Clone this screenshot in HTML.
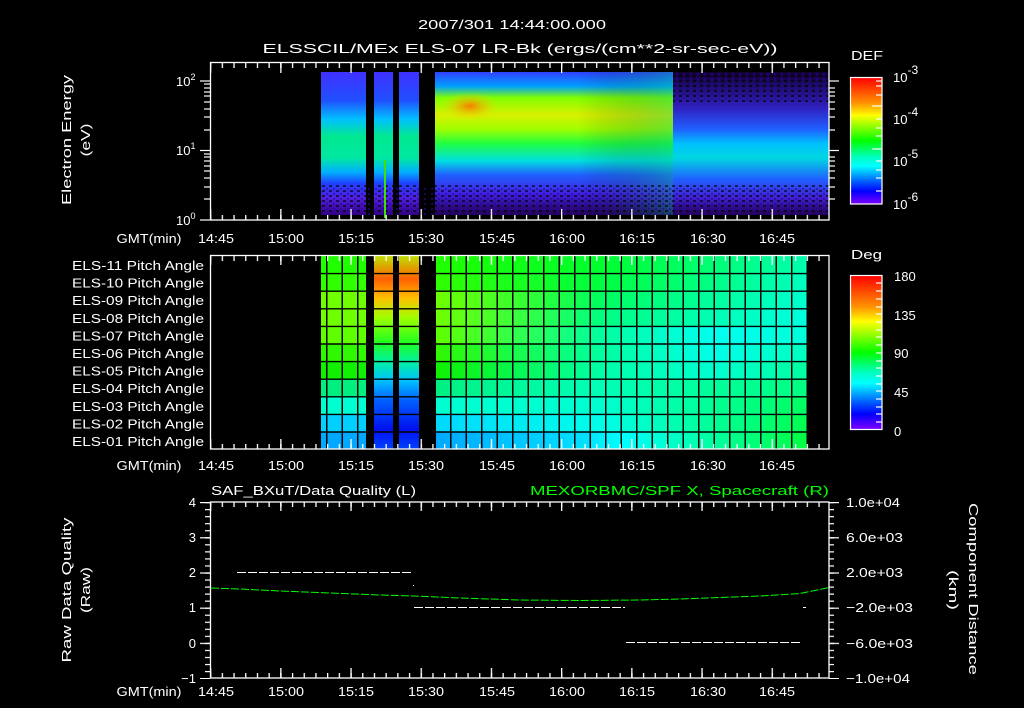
<!DOCTYPE html>
<html><head><meta charset="utf-8"><style>
html,body{margin:0;padding:0;background:#000;}
svg{display:block}
text{font-family:"Liberation Sans",sans-serif;fill:#fff;font-size:13px}
</style></head><body>
<svg width="1024" height="708" viewBox="0 0 1024 708" xmlns="http://www.w3.org/2000/svg">
<defs>
<linearGradient id="gA" x1="0" y1="0" x2="0" y2="1">
<stop offset="0" stop-color="#4030ff"/><stop offset="0.2" stop-color="#2050ff"/><stop offset="0.33" stop-color="#00c0ff"/><stop offset="0.45" stop-color="#00e890"/><stop offset="0.6" stop-color="#00e8a0"/><stop offset="0.7" stop-color="#00b0ff"/><stop offset="0.78" stop-color="#2040ff"/><stop offset="0.88" stop-color="#5020e0"/><stop offset="1" stop-color="#300080"/></linearGradient>
<linearGradient id="gB" x1="0" y1="0" x2="0" y2="1">
<stop offset="0" stop-color="#3040ff"/><stop offset="0.1" stop-color="#00a0ff"/><stop offset="0.18" stop-color="#80ff00"/><stop offset="0.3" stop-color="#d8f000"/><stop offset="0.4" stop-color="#a0ff00"/><stop offset="0.5" stop-color="#20ff40"/><stop offset="0.62" stop-color="#00e0e0"/><stop offset="0.72" stop-color="#2060ff"/><stop offset="0.85" stop-color="#4020e0"/><stop offset="1" stop-color="#200050"/></linearGradient>
<linearGradient id="gC" x1="0" y1="0" x2="0" y2="1">
<stop offset="0" stop-color="#100030"/><stop offset="0.25" stop-color="#3020c0"/><stop offset="0.4" stop-color="#2060ff"/><stop offset="0.5" stop-color="#00c0ff"/><stop offset="0.6" stop-color="#00d8e0"/><stop offset="0.75" stop-color="#2060ff"/><stop offset="0.88" stop-color="#4020d0"/><stop offset="1" stop-color="#200050"/></linearGradient>
<linearGradient id="gBh" x1="0" y1="0" x2="1" y2="0">
<stop offset="0" stop-color="#000" stop-opacity="0"/><stop offset="0.6" stop-color="#000" stop-opacity="0"/><stop offset="1" stop-color="#00c080" stop-opacity="0.35"/></linearGradient>
<radialGradient id="gOr" cx="0.5" cy="0.5" r="0.5">
<stop offset="0" stop-color="#ff7000" stop-opacity="0.9"/><stop offset="1" stop-color="#ffd000" stop-opacity="0"/></radialGradient>
<linearGradient id="cb1" x1="0" y1="0" x2="0" y2="1">
<stop offset="0" stop-color="#ff0000"/><stop offset="0.2" stop-color="#ff9000"/><stop offset="0.3" stop-color="#ffff00"/><stop offset="0.5" stop-color="#00ff00"/><stop offset="0.63" stop-color="#00ffc0"/><stop offset="0.7" stop-color="#00ffff"/><stop offset="0.82" stop-color="#0060ff"/><stop offset="0.9" stop-color="#0000ff"/><stop offset="1" stop-color="#8000ff"/></linearGradient>
<pattern id="tmin" x="210" y="0" width="11.7" height="10" patternUnits="userSpaceOnUse"><rect x="0" y="0" width="1.3" height="10" fill="#fff"/></pattern>
<pattern id="tmaj" x="210" y="0" width="70.2" height="20" patternUnits="userSpaceOnUse"><rect x="0" y="0" width="1.3" height="20" fill="#fff"/></pattern>
<pattern id="vgrid" x="326" y="0" width="15.5" height="10" patternUnits="userSpaceOnUse"><rect x="0" y="0" width="1.5" height="10" fill="#000"/></pattern>
<pattern id="yb" x="0" y="502" width="10" height="7.04" patternUnits="userSpaceOnUse"><rect x="0" y="0" width="10" height="1.2" fill="#fff"/></pattern>
<pattern id="ybM" x="0" y="502" width="12" height="35.2" patternUnits="userSpaceOnUse"><rect x="0" y="0" width="12" height="1.2" fill="#fff"/></pattern>
<pattern id="speck" x="0" y="0" width="7" height="5" patternUnits="userSpaceOnUse"><rect x="0" y="0" width="3" height="2" fill="#000" opacity="0.6"/><rect x="4" y="3" width="2" height="2" fill="#3000a0" opacity="0.6"/></pattern>
</defs>

<!-- Titles -->
<text x="512" y="29" text-anchor="middle" font-size="17" textLength="188" lengthAdjust="spacingAndGlyphs">2007/301 14:44:00.000</text>
<text x="520" y="53" text-anchor="middle" font-size="17" textLength="515" lengthAdjust="spacingAndGlyphs">ELSSCIL/MEx ELS-07 LR-Bk  (ergs/(cm**2-sr-sec-eV))</text>

<!-- ===== TOP PANEL ===== -->
<rect x="321" y="72" width="45" height="143" fill="url(#gA)"/>
<rect x="374" y="72" width="19" height="143" fill="url(#gA)"/>
<rect x="399" y="72" width="20" height="143" fill="url(#gA)"/>
<rect x="435" y="72" width="238" height="143" fill="url(#gB)"/>
<rect x="435" y="72" width="238" height="143" fill="url(#gBh)"/>
<ellipse cx="470" cy="106" rx="28" ry="14" fill="url(#gOr)"/>
<rect x="673" y="72" width="156" height="143" fill="url(#gC)"/>
<rect x="321" y="185" width="508" height="30" fill="url(#speck)"/>
<rect x="673" y="72" width="156" height="30" fill="url(#speck)"/>
<rect x="384" y="160" width="2" height="58" fill="#40e000"/>
<rect x="210.5" y="62.5" width="618.5" height="157.5" fill="none" stroke="#fff" stroke-width="1.3"/>
<rect x="210" y="63" width="619" height="5" fill="url(#tmin)"/>
<rect x="210" y="63" width="619" height="10" fill="url(#tmaj)"/>
<rect x="210" y="215" width="619" height="5" fill="url(#tmin)"/>
<rect x="210" y="209" width="619" height="11" fill="url(#tmaj)"/>
<g stroke="#fff" stroke-width="1.2">
<line x1="200" y1="81" x2="210" y2="81"/><line x1="200" y1="150.5" x2="210" y2="150.5"/><line x1="200" y1="220" x2="210" y2="220"/>
<line x1="204" y1="199" x2="210" y2="199"/><line x1="204" y1="187" x2="210" y2="187"/><line x1="204" y1="178" x2="210" y2="178"/><line x1="204" y1="171" x2="210" y2="171"/><line x1="204" y1="166" x2="210" y2="166"/><line x1="204" y1="161" x2="210" y2="161"/><line x1="204" y1="157" x2="210" y2="157"/><line x1="204" y1="154" x2="210" y2="154"/>
<line x1="204" y1="130" x2="210" y2="130"/><line x1="204" y1="117" x2="210" y2="117"/><line x1="204" y1="109" x2="210" y2="109"/><line x1="204" y1="102" x2="210" y2="102"/><line x1="204" y1="96" x2="210" y2="96"/><line x1="204" y1="92" x2="210" y2="92"/><line x1="204" y1="88" x2="210" y2="88"/><line x1="204" y1="84" x2="210" y2="84"/>
<line x1="829" y1="81" x2="839" y2="81"/><line x1="829" y1="150.5" x2="839" y2="150.5"/>
<line x1="829" y1="199" x2="835" y2="199"/><line x1="829" y1="187" x2="835" y2="187"/><line x1="829" y1="178" x2="835" y2="178"/><line x1="829" y1="171" x2="835" y2="171"/><line x1="829" y1="166" x2="835" y2="166"/><line x1="829" y1="161" x2="835" y2="161"/><line x1="829" y1="157" x2="835" y2="157"/>
<line x1="829" y1="130" x2="835" y2="130"/><line x1="829" y1="117" x2="835" y2="117"/><line x1="829" y1="109" x2="835" y2="109"/><line x1="829" y1="102" x2="835" y2="102"/><line x1="829" y1="96" x2="835" y2="96"/><line x1="829" y1="92" x2="835" y2="92"/><line x1="829" y1="88" x2="835" y2="88"/>
</g>
<text x="176" y="86" font-size="14">10<tspan dy="-6" font-size="9">2</tspan></text>
<text x="176" y="155" font-size="14">10<tspan dy="-6" font-size="9">1</tspan></text>
<text x="176" y="225" font-size="14">10<tspan dy="-6" font-size="9">0</tspan></text>
<text transform="translate(71,140) rotate(-90)" text-anchor="middle" font-size="16" textLength="130" lengthAdjust="spacingAndGlyphs">Electron Energy</text>
<text transform="translate(90,140) rotate(-90)" text-anchor="middle" font-size="16" textLength="33" lengthAdjust="spacingAndGlyphs">(eV)</text>
<g font-size="14" text-anchor="middle">
<text x="149" y="243" textLength="65" lengthAdjust="spacingAndGlyphs">GMT(min)</text>
<text x="216" y="243" textLength="36" lengthAdjust="spacingAndGlyphs">14:45</text><text x="286" y="243" textLength="36" lengthAdjust="spacingAndGlyphs">15:00</text><text x="356" y="243" textLength="36" lengthAdjust="spacingAndGlyphs">15:15</text><text x="426" y="243" textLength="36" lengthAdjust="spacingAndGlyphs">15:30</text><text x="497" y="243" textLength="36" lengthAdjust="spacingAndGlyphs">15:45</text><text x="567" y="243" textLength="36" lengthAdjust="spacingAndGlyphs">16:00</text><text x="637" y="243" textLength="36" lengthAdjust="spacingAndGlyphs">16:15</text><text x="708" y="243" textLength="36" lengthAdjust="spacingAndGlyphs">16:30</text><text x="777" y="243" textLength="36" lengthAdjust="spacingAndGlyphs">16:45</text>
</g>
<text x="851" y="60" font-size="16" textLength="32" lengthAdjust="spacingAndGlyphs">DEF</text>
<rect x="850.5" y="77.5" width="31.5" height="126.5" fill="url(#cb1)" stroke="#fff" stroke-width="1.2"/>
<g stroke="#fff" stroke-width="1.2">
<line x1="876" y1="81" x2="882" y2="81"/><line x1="876" y1="86" x2="882" y2="86"/><line x1="876" y1="95" x2="882" y2="95"/><line x1="872" y1="106" x2="882" y2="106"/><line x1="876" y1="119" x2="882" y2="119"/><line x1="876" y1="128" x2="882" y2="128"/><line x1="876" y1="136" x2="882" y2="136"/><line x1="872" y1="149" x2="882" y2="149"/><line x1="876" y1="161" x2="882" y2="161"/><line x1="876" y1="170" x2="882" y2="170"/><line x1="876" y1="178" x2="882" y2="178"/><line x1="876" y1="191" x2="882" y2="191"/>
</g>
<text x="893" y="82" font-size="17">10<tspan dy="-8" font-size="12">-3</tspan></text>
<text x="893" y="124" font-size="17">10<tspan dy="-8" font-size="12">-4</tspan></text>
<text x="893" y="166" font-size="17">10<tspan dy="-8" font-size="12">-5</tspan></text>
<text x="893" y="209" font-size="17">10<tspan dy="-8" font-size="12">-6</tspan></text>

<!-- ===== MID PANEL ===== -->
<g>
<rect x="321" y="256" width="45" height="17.6" fill="#20ff00"/>
<rect x="321" y="273.6" width="45" height="17.6" fill="#30ff00"/>
<rect x="321" y="291.2" width="45" height="17.6" fill="#70ff00"/>
<rect x="321" y="308.8" width="45" height="17.6" fill="#70ff00"/>
<rect x="321" y="326.4" width="45" height="17.6" fill="#60ff00"/>
<rect x="321" y="344" width="45" height="17.6" fill="#30f800"/>
<rect x="321" y="361.6" width="45" height="17.6" fill="#10f000"/>
<rect x="321" y="379.2" width="45" height="17.6" fill="#00f080"/>
<rect x="321" y="396.8" width="45" height="17.6" fill="#00ffd0"/>
<rect x="321" y="414.4" width="45" height="17.6" fill="#00d0ff"/>
<rect x="321" y="432" width="45" height="16.5" fill="#00a8ff"/>
<linearGradient id="sp" x1="0" y1="0" x2="0" y2="1">
<stop offset="0" stop-color="#c0e000"/><stop offset="0.12" stop-color="#ff6000"/><stop offset="0.22" stop-color="#ffc000"/><stop offset="0.32" stop-color="#a0ff00"/><stop offset="0.45" stop-color="#20ff20"/><stop offset="0.55" stop-color="#00f0a0"/><stop offset="0.65" stop-color="#00c0ff"/><stop offset="0.75" stop-color="#0060ff"/><stop offset="0.9" stop-color="#0010f0"/><stop offset="1" stop-color="#0040ff"/></linearGradient>
<rect x="374" y="256" width="19" height="192.5" fill="url(#sp)"/>
<rect x="399" y="256" width="20" height="192.5" fill="url(#sp)"/>
<linearGradient id="r0" x1="0" x2="1"><stop offset="0" stop-color="#20ff00"/><stop offset="0.45" stop-color="#00ff30"/><stop offset="1" stop-color="#00ffb0"/></linearGradient>
<linearGradient id="r1" x1="0" x2="1"><stop offset="0" stop-color="#30ff00"/><stop offset="0.45" stop-color="#00ff40"/><stop offset="1" stop-color="#00ffc0"/></linearGradient>
<linearGradient id="r2" x1="0" x2="1"><stop offset="0" stop-color="#70ff00"/><stop offset="0.45" stop-color="#00ff60"/><stop offset="1" stop-color="#00ffd0"/></linearGradient>
<linearGradient id="r3" x1="0" x2="1"><stop offset="0" stop-color="#70ff00"/><stop offset="0.45" stop-color="#00ff80"/><stop offset="1" stop-color="#00ffe0"/></linearGradient>
<linearGradient id="r4" x1="0" x2="1"><stop offset="0" stop-color="#60ff00"/><stop offset="0.45" stop-color="#00ffa0"/><stop offset="0.75" stop-color="#00fff0"/><stop offset="1" stop-color="#00ffd8"/></linearGradient>
<linearGradient id="r5" x1="0" x2="1"><stop offset="0" stop-color="#30f800"/><stop offset="0.45" stop-color="#00ffa0"/><stop offset="0.75" stop-color="#00ffe8"/><stop offset="1" stop-color="#00ffc0"/></linearGradient>
<linearGradient id="r6" x1="0" x2="1"><stop offset="0" stop-color="#10f000"/><stop offset="0.45" stop-color="#00ffa8"/><stop offset="0.75" stop-color="#00ffd0"/><stop offset="1" stop-color="#00ffa0"/></linearGradient>
<linearGradient id="r7" x1="0" x2="1"><stop offset="0" stop-color="#00f080"/><stop offset="0.45" stop-color="#00ffb8"/><stop offset="1" stop-color="#00ff80"/></linearGradient>
<linearGradient id="r8" x1="0" x2="1"><stop offset="0" stop-color="#00ffd0"/><stop offset="0.45" stop-color="#00ffd0"/><stop offset="1" stop-color="#00ff60"/></linearGradient>
<linearGradient id="r9" x1="0" x2="1"><stop offset="0" stop-color="#00d8ff"/><stop offset="0.45" stop-color="#00ffe8"/><stop offset="1" stop-color="#00ff50"/></linearGradient>
<linearGradient id="r10" x1="0" x2="1"><stop offset="0" stop-color="#00a8ff"/><stop offset="0.4" stop-color="#00e0ff"/><stop offset="0.5" stop-color="#00ffff"/><stop offset="1" stop-color="#00ff40"/></linearGradient>
<rect x="435" y="256" width="372" height="17.6" fill="url(#r0)"/>
<rect x="435" y="273.6" width="372" height="17.6" fill="url(#r1)"/>
<rect x="435" y="291.2" width="372" height="17.6" fill="url(#r2)"/>
<rect x="435" y="308.8" width="372" height="17.6" fill="url(#r3)"/>
<rect x="435" y="326.4" width="372" height="17.6" fill="url(#r4)"/>
<rect x="435" y="344" width="372" height="17.6" fill="url(#r5)"/>
<rect x="435" y="361.6" width="372" height="17.6" fill="url(#r6)"/>
<rect x="435" y="379.2" width="372" height="17.6" fill="url(#r7)"/>
<rect x="435" y="396.8" width="372" height="17.6" fill="url(#r8)"/>
<rect x="435" y="414.4" width="372" height="17.6" fill="url(#r9)"/>
<rect x="435" y="432" width="372" height="16.5" fill="url(#r10)"/>
<rect x="321" y="256" width="45" height="192.5" fill="url(#vgrid)"/>
<rect x="435" y="256" width="372" height="192.5" fill="url(#vgrid)"/>
<g stroke="#000" stroke-width="1.4">
<line x1="321" y1="273.6" x2="807" y2="273.6"/><line x1="321" y1="291.2" x2="807" y2="291.2"/><line x1="321" y1="308.8" x2="807" y2="308.8"/><line x1="321" y1="326.4" x2="807" y2="326.4"/><line x1="321" y1="344" x2="807" y2="344"/><line x1="321" y1="361.6" x2="807" y2="361.6"/><line x1="321" y1="379.2" x2="807" y2="379.2"/><line x1="321" y1="396.8" x2="807" y2="396.8"/><line x1="321" y1="414.4" x2="807" y2="414.4"/><line x1="321" y1="432" x2="807" y2="432"/>
</g>
</g>
<rect x="210.5" y="255.5" width="618.5" height="193.5" fill="none" stroke="#fff" stroke-width="1.3"/>
<rect x="210" y="256" width="619" height="5" fill="url(#tmin)"/>
<rect x="210" y="256" width="619" height="9" fill="url(#tmaj)"/>
<rect x="210" y="444" width="619" height="5" fill="url(#tmin)"/>
<rect x="210" y="439" width="619" height="10" fill="url(#tmaj)"/>
<g font-size="14" text-anchor="end">
<text x="204" y="270" textLength="132" lengthAdjust="spacingAndGlyphs">ELS-11 Pitch Angle</text>
<text x="204" y="287.6" textLength="132" lengthAdjust="spacingAndGlyphs">ELS-10 Pitch Angle</text>
<text x="204" y="305.2" textLength="132" lengthAdjust="spacingAndGlyphs">ELS-09 Pitch Angle</text>
<text x="204" y="322.8" textLength="132" lengthAdjust="spacingAndGlyphs">ELS-08 Pitch Angle</text>
<text x="204" y="340.4" textLength="132" lengthAdjust="spacingAndGlyphs">ELS-07 Pitch Angle</text>
<text x="204" y="358" textLength="132" lengthAdjust="spacingAndGlyphs">ELS-06 Pitch Angle</text>
<text x="204" y="375.6" textLength="132" lengthAdjust="spacingAndGlyphs">ELS-05 Pitch Angle</text>
<text x="204" y="393.2" textLength="132" lengthAdjust="spacingAndGlyphs">ELS-04 Pitch Angle</text>
<text x="204" y="410.8" textLength="132" lengthAdjust="spacingAndGlyphs">ELS-03 Pitch Angle</text>
<text x="204" y="428.4" textLength="132" lengthAdjust="spacingAndGlyphs">ELS-02 Pitch Angle</text>
<text x="204" y="446" textLength="132" lengthAdjust="spacingAndGlyphs">ELS-01 Pitch Angle</text>
</g>
<g font-size="14" text-anchor="middle">
<text x="149" y="470" textLength="65" lengthAdjust="spacingAndGlyphs">GMT(min)</text>
<text x="216" y="470" textLength="36" lengthAdjust="spacingAndGlyphs">14:45</text><text x="286" y="470" textLength="36" lengthAdjust="spacingAndGlyphs">15:00</text><text x="356" y="470" textLength="36" lengthAdjust="spacingAndGlyphs">15:15</text><text x="426" y="470" textLength="36" lengthAdjust="spacingAndGlyphs">15:30</text><text x="497" y="470" textLength="36" lengthAdjust="spacingAndGlyphs">15:45</text><text x="567" y="470" textLength="36" lengthAdjust="spacingAndGlyphs">16:00</text><text x="637" y="470" textLength="36" lengthAdjust="spacingAndGlyphs">16:15</text><text x="708" y="470" textLength="36" lengthAdjust="spacingAndGlyphs">16:30</text><text x="777" y="470" textLength="36" lengthAdjust="spacingAndGlyphs">16:45</text>
</g>
<text x="851" y="259" font-size="16" textLength="31" lengthAdjust="spacingAndGlyphs">Deg</text>
<rect x="850.5" y="275.5" width="31.5" height="154" fill="url(#cb1)" stroke="#fff" stroke-width="1.2"/>
<g stroke="#fff" stroke-width="1.2">
<line x1="876" y1="283" x2="882" y2="283"/><line x1="876" y1="291" x2="882" y2="291"/><line x1="876" y1="299" x2="882" y2="299"/><line x1="876" y1="307" x2="882" y2="307"/><line x1="876" y1="314" x2="882" y2="314"/><line x1="876" y1="322" x2="882" y2="322"/><line x1="876" y1="330" x2="882" y2="330"/><line x1="876" y1="337" x2="882" y2="337"/><line x1="876" y1="345" x2="882" y2="345"/><line x1="876" y1="353" x2="882" y2="353"/><line x1="876" y1="361" x2="882" y2="361"/><line x1="876" y1="368" x2="882" y2="368"/><line x1="876" y1="376" x2="882" y2="376"/><line x1="876" y1="384" x2="882" y2="384"/><line x1="876" y1="391" x2="882" y2="391"/><line x1="876" y1="399" x2="882" y2="399"/><line x1="876" y1="407" x2="882" y2="407"/><line x1="876" y1="414" x2="882" y2="414"/><line x1="876" y1="422" x2="882" y2="422"/>
</g>
<g font-size="17">
<text x="894" y="281">180</text><text x="894" y="320">135</text><text x="894" y="358">90</text><text x="894" y="397">45</text><text x="894" y="436">0</text>
</g>

<!-- ===== BOTTOM PANEL ===== -->
<text x="211" y="495" font-size="16" textLength="205" lengthAdjust="spacingAndGlyphs">SAF_BXuT/Data Quality (L)</text>
<text x="829" y="495" font-size="16" text-anchor="end" style="fill:#00ff00" textLength="299" lengthAdjust="spacingAndGlyphs">MEXORBMC/SPF X, Spacecraft (R)</text>
<rect x="210.5" y="502" width="618.5" height="176" fill="none" stroke="#fff" stroke-width="1.3"/>
<rect x="210" y="502" width="619" height="5" fill="url(#tmin)"/>
<rect x="210" y="502" width="619" height="9" fill="url(#tmaj)"/>
<rect x="210" y="673" width="619" height="5" fill="url(#tmin)"/>
<rect x="210" y="668" width="619" height="10" fill="url(#tmaj)"/>
<rect x="205" y="502" width="5" height="177" fill="url(#yb)"/>
<rect x="200" y="502" width="10" height="177" fill="url(#ybM)"/>
<rect x="829" y="502" width="5" height="177" fill="url(#yb)"/>
<rect x="829" y="502" width="10" height="177" fill="url(#ybM)"/>
<g font-size="14" text-anchor="end">
<text x="196" y="507">4</text><text x="196" y="542">3</text><text x="196" y="577">2</text><text x="196" y="612">1</text><text x="196" y="648">0</text><text x="196" y="683">−1</text>
</g>
<g font-size="14">
<text x="846" y="507" textLength="54" lengthAdjust="spacingAndGlyphs">1.0e+04</text><text x="846" y="542" textLength="57" lengthAdjust="spacingAndGlyphs">6.0e+03</text><text x="846" y="577" textLength="57" lengthAdjust="spacingAndGlyphs">2.0e+03</text><text x="846" y="612" textLength="67" lengthAdjust="spacingAndGlyphs">−2.0e+03</text><text x="846" y="648" textLength="67" lengthAdjust="spacingAndGlyphs">−6.0e+03</text><text x="846" y="683" textLength="64" lengthAdjust="spacingAndGlyphs">−1.0e+04</text>
</g>
<g stroke="#fff" stroke-width="1" stroke-dasharray="9,2">
<line x1="237" y1="572.5" x2="413" y2="572.5"/>
<line x1="414" y1="607.5" x2="625" y2="607.5"/>
<line x1="626" y1="642.5" x2="802" y2="642.5"/>
</g>
<rect x="413" y="585" width="1" height="1" fill="#fff"/>
<rect x="803" y="607" width="3" height="1" fill="#fff"/>
<polyline points="211,588 240,589 280,591 330,593 380,595 414,596 460,598 520,600 580,600.5 640,600 680,599 720,597.5 760,596 800,593.5 829,587.5" fill="none" stroke="#00ff00" stroke-width="1" stroke-dasharray="8,2"/>
<text transform="translate(71,590) rotate(-90)" text-anchor="middle" font-size="16" textLength="145" lengthAdjust="spacingAndGlyphs">Raw Data Quality</text>
<text transform="translate(90,590) rotate(-90)" text-anchor="middle" font-size="16" textLength="46" lengthAdjust="spacingAndGlyphs">(Raw)</text>
<text transform="translate(969,589) rotate(90)" text-anchor="middle" font-size="16" textLength="172" lengthAdjust="spacingAndGlyphs">Component Distance</text>
<text transform="translate(949,590) rotate(90)" text-anchor="middle" font-size="16" textLength="40" lengthAdjust="spacingAndGlyphs">(km)</text>
<g font-size="14" text-anchor="middle">
<text x="149" y="696" textLength="65" lengthAdjust="spacingAndGlyphs">GMT(min)</text>
<text x="216" y="696" textLength="36" lengthAdjust="spacingAndGlyphs">14:45</text><text x="286" y="696" textLength="36" lengthAdjust="spacingAndGlyphs">15:00</text><text x="356" y="696" textLength="36" lengthAdjust="spacingAndGlyphs">15:15</text><text x="426" y="696" textLength="36" lengthAdjust="spacingAndGlyphs">15:30</text><text x="497" y="696" textLength="36" lengthAdjust="spacingAndGlyphs">15:45</text><text x="567" y="696" textLength="36" lengthAdjust="spacingAndGlyphs">16:00</text><text x="637" y="696" textLength="36" lengthAdjust="spacingAndGlyphs">16:15</text><text x="708" y="696" textLength="36" lengthAdjust="spacingAndGlyphs">16:30</text><text x="777" y="696" textLength="36" lengthAdjust="spacingAndGlyphs">16:45</text>
</g>
</svg>
</body></html>
